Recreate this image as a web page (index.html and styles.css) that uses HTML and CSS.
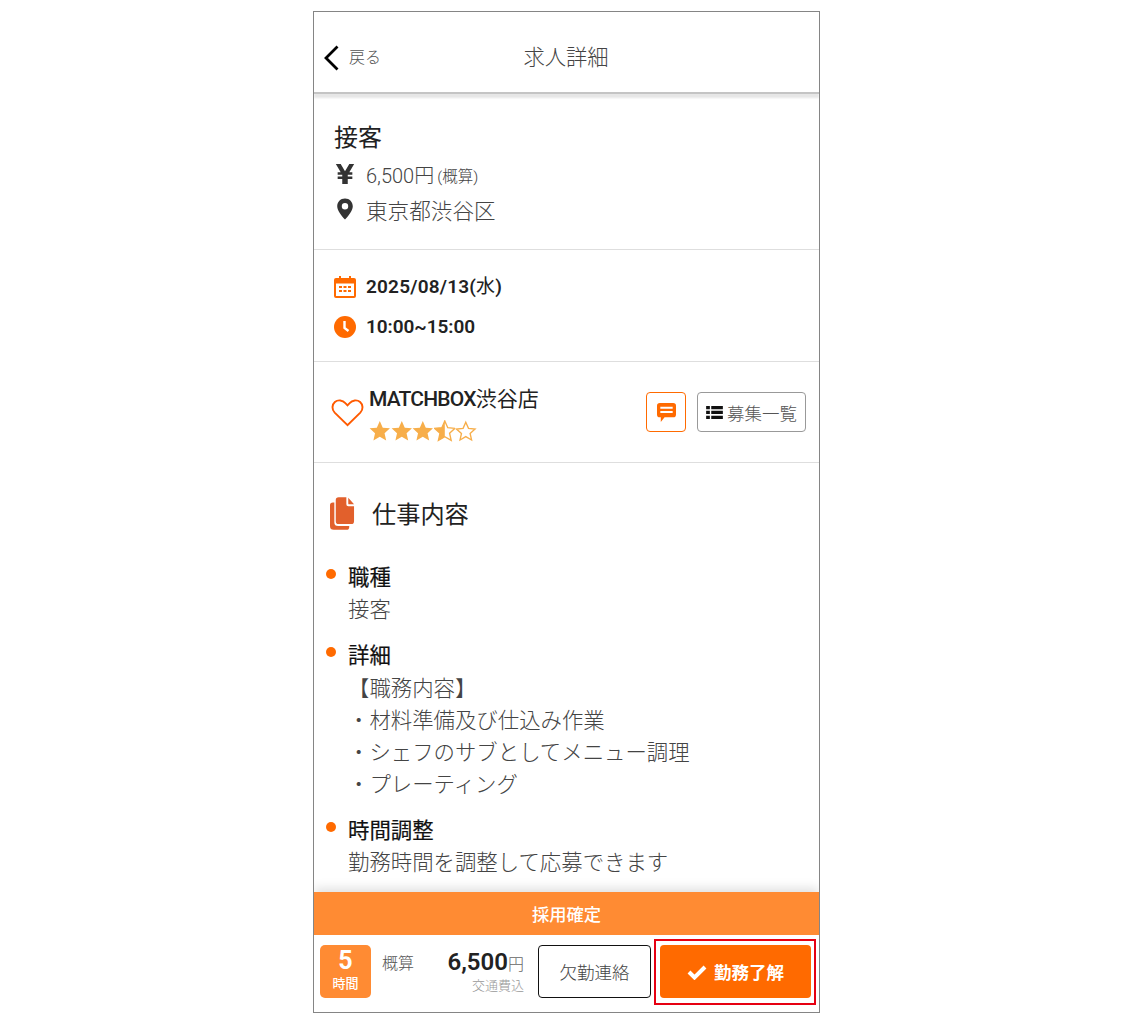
FILE: index.html
```html
<!DOCTYPE html>
<html lang="ja">
<head>
<meta charset="utf-8">
<title>求人詳細</title>
<link rel="stylesheet" href="styles.css">
</head>
<body>
<div class="frame">
  <header class="topbar">
    <a class="back">
      <svg class="back-icon" viewBox="0 0 16 26"><path d="M14.500 1.500 3 13l11.500 11.500" fill="none" stroke="#000" stroke-width="2.800"/></svg>
      <span>戻る</span>
    </a>
    <h1 class="page-title">求人詳細</h1>
  </header>
  <main class="content">
    <section class="sec sec-job">
      <h2 class="job-title">接客</h2>
      <div class="meta-row pay">
        <svg class="meta-icon" viewBox="0 0 20 24"><path d="M0 1h5.300L10 9 14.700 1H20l-5.300 9H18v2.900h-5v1.700h5v2.900h-5V23H7v-5.500H2v-2.900h5v-1.700H2V10h3.300z" fill="#333"/></svg>
        <span class="pay-val">6,500円</span><span class="pay-note">(概算)</span>
      </div>
      <div class="meta-row place">
        <svg class="meta-icon" viewBox="0 0 18 24"><path fill-rule="evenodd" d="M9 .5C4 .5.5 4.200.5 9c0 5 5 10.700 8.500 14.500C12.500 19.700 17.500 14 17.500 9 17.500 4.200 14 .5 9 .5zm0 12a3.500 3.500 0 1 1 0-7 3.500 3.500 0 0 1 0 7z" fill="#333"/></svg>
        <span>東京都渋谷区</span>
      </div>
    </section>
    <section class="sec sec-time">
      <div class="time-row">
        <svg class="time-icon" viewBox="0 0 22 22"><path fill-rule="evenodd" d="M5 0h2v2h8V0h2v2h3a2 2 0 0 1 2 2v16a2 2 0 0 1-2 2H2a2 2 0 0 1-2-2V4a2 2 0 0 1 2-2h3zM2 7.500V20h18V7.500z" fill="#ff6a00"/><path d="M5 10h3v2H5zm4.500 0h3v2h-3zm4.500 0h3v2h-3zM5 14h3v2H5zm4.500 0h3v2h-3zm4.500 0h3v2h-3z" fill="#ff6a00"/></svg>
        <span>2025/08/13(<span class="weekday">水</span>)</span>
      </div>
      <div class="time-row time-clock">
        <svg class="time-icon" viewBox="0 0 22 22"><circle cx="11" cy="11" r="11" fill="#ff6a00"/><path d="M10.500 5v7l4 3" fill="none" stroke="#fff" stroke-width="2.400"/></svg>
        <span>10:00~15:00</span>
      </div>
    </section>
    <section class="sec sec-shop">
      <svg class="heart" viewBox="0 0 34 30"><path d="M17 27.500 3.800 14.600C.6 11.300.9 6.400 4 3.700c3.200-2.700 8-2 10.800 1.100L17 7.100l2.200-2.300C22 1.700 26.800 1 30 3.700c3.100 2.700 3.400 7.600.2 10.900z" fill="none" stroke="#ff5a00" stroke-width="2"/></svg>
      <div class="shop-info">
        <div class="shop-name"><span class="shop-latin">MATCHBOX</span>渋谷店</div>
        <div class="stars">
          <svg class="star" viewBox="0 0 24 24"><path d="M12 1l3.300 7.500 8 .8-6 5.400 1.800 8L12 18.600l-7.100 4.100 1.800-8-6-5.400 8-.8z" fill="#f7ae4a"/></svg>
          <svg class="star" viewBox="0 0 24 24"><path d="M12 1l3.300 7.500 8 .8-6 5.400 1.800 8L12 18.600l-7.100 4.100 1.800-8-6-5.400 8-.8z" fill="#f7ae4a"/></svg>
          <svg class="star" viewBox="0 0 24 24"><path d="M12 1l3.300 7.500 8 .8-6 5.400 1.800 8L12 18.600l-7.100 4.100 1.800-8-6-5.400 8-.8z" fill="#f7ae4a"/></svg>
          <svg class="star" viewBox="0 0 24 24"><path d="M12 1l3.300 7.500 8 .8-6 5.400 1.800 8L12 18.600l-7.100 4.100 1.800-8-6-5.400 8-.8z" fill="none" stroke="#f7ae4a" stroke-width="1.500"/><path d="M12 1v17.600l-7.100 4.100 1.800-8-6-5.400 8-.8z" fill="#f7ae4a"/></svg>
          <svg class="star" viewBox="0 0 24 24"><path d="M12 2.500l3 6.800 7.300.8-5.500 4.900 1.600 7.200-6.400-3.700-6.400 3.700 1.600-7.200-5.500-4.900 7.300-.8z" fill="none" stroke="#f7ae4a" stroke-width="1.500"/></svg>
        </div>
      </div>
      <div class="shop-actions">
        <button class="btn-chat" type="button" aria-label="メッセージ">
          <svg class="chat-icon" viewBox="0 0 20 20"><path fill-rule="evenodd" d="M3 0h14a3 3 0 0 1 3 3v9a3 3 0 0 1-3 3H8l-4 5v-5H3a3 3 0 0 1-3-3V3a3 3 0 0 1 3-3zm.500 4v2h13V4zm0 4.500v2h13v-2z" fill="#ff6a00"/></svg>
        </button>
        <button class="btn-list" type="button">
          <svg class="list-icon" viewBox="0 0 18 14"><path d="M0 0h4v3.500H0zm5.500 0H18v3.500H5.500zM0 5h4v3.700H0zm5.500 0H18v3.700H5.500zM0 10.500h4V14H0zm5.500 0H18V14H5.500z" fill="#111"/></svg>
          <span>募集一覧</span>
        </button>
      </div>
    </section>
    <section class="sec-detail">
      <div class="detail-head">
        <svg class="doc-icon" viewBox="0 0 26 34"><path d="M3 5.500h1.500V26a4 4 0 0 0 4 4H20v1a3 3 0 0 1-3 3H4a4 4 0 0 1-4-4V8.500a3 3 0 0 1 3-3z" fill="#e2602c"/><path d="M6 3a3 3 0 0 1 3-3h8v7.500a2 2 0 0 0 2 2h6V25a3 3 0 0 1-3 3H9a3 3 0 0 1-3-3zM19 .5l6 7h-5a1 1 0 0 1-1-1z" fill="#e2602c"/></svg>
        <h2 class="detail-title">仕事内容</h2>
      </div>
      <dl class="items">
        <div class="item">
          <dt>職種</dt>
          <dd>接客</dd>
        </div>
        <div class="item">
          <dt>詳細</dt>
          <dd class="dd-list">【職務内容】<br>・材料準備及び仕込み作業<br>・シェフのサブとしてメニュー調理<br>・プレーティング</dd>
        </div>
        <div class="item">
          <dt>時間調整</dt>
          <dd>勤務時間を調整して応募できます</dd>
        </div>
      </dl>
    </section>
  </main>
  <footer class="footer">
    <div class="status">採用確定</div>
    <div class="actions">
      <div class="hours"><strong>5</strong><span>時間</span></div>
      <div class="est">概算</div>
      <div class="price">
        <div class="amount"><strong>6,500</strong><span>円</span></div>
        <div class="fare">交通費込</div>
      </div>
      <button class="btn-absent" type="button">欠勤連絡</button>
      <div class="highlight">
        <button class="btn-ok" type="button">
          <svg class="check" viewBox="0 0 20 16"><path d="M2 8 7.500 13.500 18 3" fill="none" stroke="#fff" stroke-width="4"/></svg>
          <span>勤務了解</span>
        </button>
      </div>
    </div>
  </footer>
</div>
</body>
</html>
```
FILE: styles.css
```css
* { box-sizing: border-box; }
html, body { margin: 0; padding: 0; background: #fff; }
body {
  height: 1021px;
  font-family: Roboto, "Noto Sans CJK JP", sans-serif;
  color: #333;
  overflow: hidden;
}
h1, h2, dl, dd, dt { margin: 0; padding: 0; font-weight: inherit; font-size: inherit; }
button { font-family: inherit; cursor: pointer; padding: 0; background: #fff; }

.frame {
  width: 507px;
  height: 1002px;
  margin: 11px 0 0 313px;
  border: 1px solid #858585;
  display: flex;
  flex-direction: column;
  overflow: hidden;
}

.topbar {
  flex: none;
  height: 82px;
  position: relative;
  display: flex;
  align-items: center;
  justify-content: center;
  padding-top: 12px;
  border-bottom: 2px solid #c4c4c4;
  box-shadow: 0 4px 2px 0 #e6e6e6;
  z-index: 1;
}
.back {
  position: absolute;
  left: 9px;
  top: 33px;
  display: flex;
  align-items: center;
  gap: 10px;
  font-size: 16px;
  line-height: 24px;
  font-weight: 300;
  color: #555;
}
.back-icon { width: 16px; height: 26px; display: block; }
.page-title { font-size: 21.300px; font-weight: 300; color: #444; line-height: 30px; margin-right: 1px; }

.content { flex: 1; min-height: 0; overflow: hidden; }

.sec { border-bottom: 1px solid #dedede; }

.sec-job { height: 156px; padding: 28px 20px 0; }
.job-title { font-size: 24px; line-height: 32px; font-weight: 400; color: #222; }
.meta-row { display: flex; align-items: center; font-weight: 300; color: #444; }
.meta-icon { width: 22px; height: 22px; margin-right: 10px; display: block; }
.pay { height: 36px; margin-top: 2px; font-size: 20px; }
.pay-note { font-size: 15.500px; margin-left: 3px; margin-top: 2px; }
.place { height: 34px; font-size: 21.600px; }

.sec-time { height: 112px; padding: 17px 20px 0; }
.time-row {
  display: flex;
  align-items: center;
  gap: 10px;
  height: 40px;
  font-size: 19px;
  line-height: 24px;
  font-weight: 600;
  letter-spacing: .2px;
  color: #222;
}
.time-clock { letter-spacing: -.05px; }
.weekday { font-weight: 400; }
.time-icon { width: 22px; height: 22px; display: block; }

.sec-shop {
  height: 101px;
  position: relative;
  display: flex;
  align-items: flex-start;
  padding: 22px 13px 0 17px;
}
.heart { width: 33px; height: 30px; margin-top: 14px; margin-right: 5px; display: block; flex: none; }
.shop-info { flex: 1; }
.shop-name { font-size: 21px; line-height: 30px; font-weight: 400; color: #222; }
.shop-latin { font-weight: 500; letter-spacing: -.8px; }
.stars { display: flex; gap: 0; margin-top: 6px; }
.star { width: 21.600px; height: 21.600px; display: block; }
.shop-actions { display: flex; gap: 11px; margin-top: 8px; }
.btn-chat {
  width: 40px;
  height: 40px;
  border: 1px solid #ff6a00;
  border-radius: 4px;
  display: flex;
  align-items: center;
  justify-content: center;
}
.chat-icon { width: 19px; height: 19px; display: block; }
.btn-list {
  width: 109px;
  height: 40px;
  border: 1px solid #999;
  border-radius: 4px;
  display: flex;
  align-items: center;
  justify-content: center;
  gap: 4px;
  font-size: 17.500px;
  font-weight: 300;
  color: #555;
}
.list-icon { width: 17px; height: 13px; display: block; }

.sec-detail { padding: 32px 0 0 16px; }
.detail-head { display: flex; align-items: center; gap: 17px; height: 34px; }
.doc-icon { width: 25px; height: 33px; display: block; margin-top: 2px; }
.detail-title { font-size: 24.200px; font-weight: 400; color: #222; }
.items { padding-top: 33px; }
.item { position: relative; padding-left: 18px; margin-bottom: 14px; }
.item::before {
  content: "";
  position: absolute;
  left: -4px;
  top: 7px;
  width: 10px;
  height: 10px;
  border-radius: 50%;
  background: #ff6a00;
}
dt { font-size: 21.400px; line-height: 32px; font-weight: 400; color: #111; -webkit-text-stroke: .2px #111; }
dd { font-size: 21.400px; line-height: 32px; font-weight: 300; color: #444; }
.dd-list { margin: 1px 0; }

.footer {
  flex: none;
  height: 120px;
  position: relative;
  z-index: 2;
  background: #fff;
  box-shadow: 0 -4px 10px rgba(0, 0, 0, .12);
}
.status {
  height: 43px;
  background: #ff8b33;
  color: #fff;
  text-align: center;
  font-size: 17.300px;
  font-weight: 500;
  line-height: 46px;
}
.actions {
  display: flex;
  align-items: flex-start;
  padding: 10px 0 0 6px;
}
.hours {
  width: 51px;
  height: 53px;
  background: #ff8b33;
  border-radius: 5px;
  color: #fff;
  display: flex;
  flex-direction: column;
  align-items: center;
  flex: none;
}
.hours strong { font-size: 25px; line-height: 31px; font-weight: 700; }
.hours span { font-size: 13px; line-height: 16px; font-weight: 500; }
.est { width: 36px; margin-left: 11px; font-size: 16px; line-height: 40px; font-weight: 300; color: #555; margin-top: -1px; flex: none; }
.price { width: 106px; text-align: right; flex: none; }
.amount { line-height: 34px; height: 34px; }
.amount strong { font-size: 24px; font-weight: 600; color: #222; }
.amount span { font-size: 16px; font-weight: 300; color: #666; }
.fare { font-size: 13px; line-height: 15px; font-weight: 300; color: #999; margin-top: -1px; }
.btn-absent {
  width: 113px;
  height: 53px;
  margin-left: 14px;
  border: 1px solid #111;
  border-radius: 4px;
  font-size: 17.500px;
  font-weight: 300;
  color: #444;
  flex: none;
}
.highlight {
  width: 162px;
  height: 66px;
  margin: -6px 0 0 3px;
  padding: 4px;
  border: 2px solid #e60012;
  flex: none;
}
.btn-ok {
  width: 151px;
  height: 53px;
  background: #ff6a00;
  border: 0;
  border-radius: 4px;
  color: #fff;
  font-size: 17.500px;
  font-weight: 700;
  display: flex;
  align-items: center;
  justify-content: center;
  gap: 7px;
}
.check { width: 20px; height: 16px; display: block; }
```
